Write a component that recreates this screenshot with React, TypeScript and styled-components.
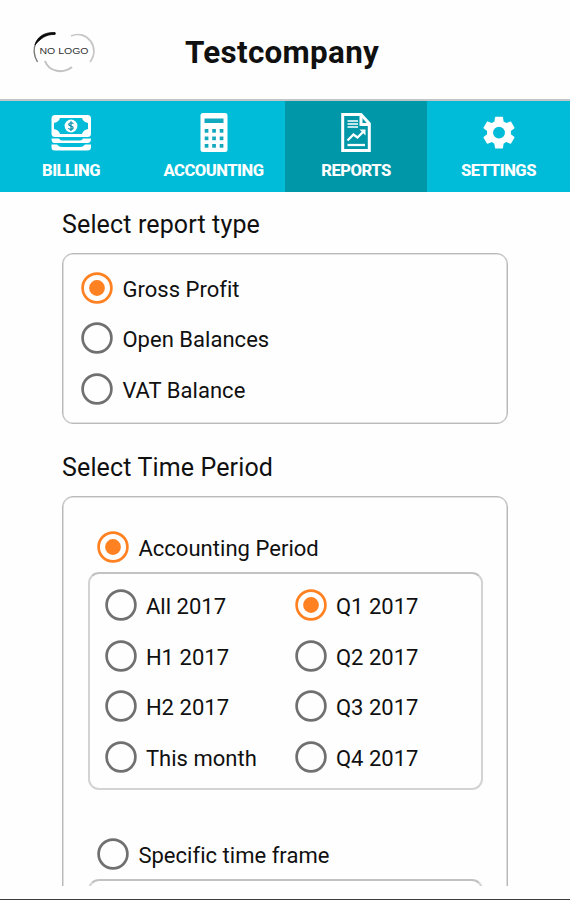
import React from "react";
import styled, { createGlobalStyle } from "styled-components";

const Global = createGlobalStyle`
  *, *::before, *::after { box-sizing: border-box; }
  body { margin: 0; background: #fefefe; font-family: Roboto, "Liberation Sans", sans-serif; color: #101010; }
`;

const Screen = styled.div`
  display: flex;
  flex-direction: column;
  width: 570px;
  height: 900px;
  overflow: hidden;
  background: #fefefe;
  border-bottom: 1px solid #3c3c3c;
`;

const Header = styled.header`
  display: grid;
  grid-template-columns: 128px 1fr 134px;
  align-items: center;
  flex: none;
  height: 101px;
  border-bottom: 2px solid #c3c6c7;
`;

const Logo = styled.svg`
  display: block;
  width: 70px;
  height: 48px;
  margin-left: 29px;
`;

const Title = styled.h1`
  margin: 6px 0 0;
  padding-left: 57px;
  font-size: 31.4px;
  line-height: 36px;
  font-weight: 700;
  letter-spacing: 0.3px;
  white-space: nowrap;
`;

const Nav = styled.nav`
  display: grid;
  grid-template-columns: 142px 143px 142px 143px;
  flex: none;
  height: 91px;
  background: #00bcd8;
`;

const Tab = styled.a<{ $active?: boolean }>`
  display: flex;
  flex-direction: column;
  align-items: center;
  padding-top: 10px;
  color: #fff;
  background: ${(p) => (p.$active ? "#0097a9" : "transparent")};

  svg { display: block; width: 42px; height: 42px; flex: none; }
`;

const TabLabel = styled.span`
  margin-top: 8px;
  font-size: 16.6px;
  line-height: 20px;
  font-weight: 800;
  letter-spacing: -0.5px;
`;

const Content = styled.main`
  flex: none;
  height: 694px;
  padding: 16px 62px 0;
  overflow: hidden;
`;

const SectionTitle = styled.h2<{ $gap: number }>`
  margin: 0 0 ${(p) => p.$gap}px;
  font-size: 25px;
  line-height: 34px;
  font-weight: 400;
  letter-spacing: 0.14px;
  white-space: nowrap;
`;

const Panel = styled.section<{ $height: number; $pad: string }>`
  width: 446px;
  height: ${(p) => p.$height}px;
  padding: ${(p) => p.$pad};
  border: 1px solid #b9b9b9;
  box-shadow: inset 0 0 0 0.6px #c8c8c8;
  border-radius: 11px;
  margin-bottom: 27px;
`;

const InnerPanel = styled.div`
  display: grid;
  grid-template-columns: 190px 1fr;
  width: 395px;
  height: 218px;
  padding: 6px 0 0 14.5px;
  border: 2px solid #d3d3d3;
  border-top-color: #c2c2c2;
  border-radius: 11px;
  margin: -0.6px 0 39px 25px;
`;

const Option = styled.label<{ $indent?: boolean }>`
  display: flex;
  align-items: center;
  gap: 9.4px;
  height: 50.67px;
  padding-left: ${(p) => (p.$indent ? 34 : 0)}px;
`;

const OptionText = styled.span`
  padding-top: 4px;
  font-size: 22px;
  line-height: 28px;
  letter-spacing: 0.03px;
  white-space: nowrap;
`;

const RadioSvg = styled.svg`
  display: block;
  flex: none;
  width: 32px;
  height: 32px;
`;

function Radio({ label, on, indent }: { label: string; on?: boolean; indent?: boolean }) {
  return (
    <Option $indent={indent}>
      <RadioSvg viewBox="0 0 32 32">
        <circle cx="16" cy="16" r="14.4" fill="none" stroke={on ? "#ff8122" : "#707070"} strokeWidth="2.7" />
        {on && <circle cx="16" cy="16" r="7.9" fill="#ff8122" />}
      </RadioSvg>
      <OptionText>{label}</OptionText>
    </Option>
  );
}

const BillingIcon = () => (
  <svg viewBox="0 0 42 42">
    <rect x="1.500" y="4" width="39.500" height="22" rx="3.500" fill="#fff" />
    <path d="M10 7H32Q33 11 38 12V18Q33 19 32 23H10Q9 19 4 18V12Q9 11 10 7Z" fill="#00bcd8" />
    <circle cx="21" cy="15" r="6.400" fill="#fff" />
    <path d="M23.4 12.8C22.7 11.3 18.7 11.3 18.8 13.4C18.9 15.3 23.3 14.7 23.2 16.9C23.1 19 19 18.9 18.5 17.1M21 10.3V19.9" fill="none" stroke="#008ba8" strokeWidth="1.2" />
    <path d="M1.500 27.500H9Q10 29.500 12 29.500H30Q32 29.500 33 27.500H41Q41 32 37.500 32H4.500Q1.500 32 1.500 27.500ZM1.500 33.500H7Q9 36 12 36H30Q33 36 35 33.500H41V36Q41 39.500 37.500 39.500H4.500Q1.500 39.500 1.500 36Z" fill="#fff" />
  </svg>
);

const AccountingIcon = () => (
  <svg viewBox="0 0 42 42">
    <rect x="7.500" y="2" width="27" height="39" rx="2.500" fill="#fff" />
    <rect x="11.500" y="7.500" width="19" height="4.500" fill="#12a8bd" />
    {[18, 25.5, 33].map((y) => [11.7, 19.2, 26.7].map((x) => (
      <rect key={`${x}-${y}`} x={x} y={y} width="3.7" height="3.7" fill="#12a8bd" />
    )))}
  </svg>
);

const ReportsIcon = () => (
  <svg viewBox="0 0 42 42" fill="none" stroke="#fff">
    <path d="M7.700 3.500H26L34.300 12.500V39.500H7.700Z" strokeWidth="3" />
    <path d="M26 4V13.500H34" strokeWidth="3" />
    <path d="M12.500 10H23M12.500 13H23M12.500 16H23" strokeWidth="1.700" />
    <path d="M12.500 29.500L18.500 23.500L22.500 26.500L29 20" strokeWidth="2.300" />
    <path d="M24.500 18.500H30.500V24.500Z" fill="#fff" stroke="none" />
    <path d="M12.500 34H30" strokeWidth="2.300" />
  </svg>
);

const SettingsIcon = () => (
  <svg viewBox="0 0 24 24">
    <path transform="translate(12 12.350) scale(.95) translate(-12 -12)" fill="#fff" d="M19.140 12.940c.04-.3.060-.610.060-.940 0-.320-.020-.640-.070-.940l2.030-1.580c.180-.140.230-.410.120-.610l-1.920-3.320c-.120-.220-.370-.290-.590-.220l-2.390.960c-.500-.380-1.030-.700-1.620-.940l-.360-2.540c-.040-.240-.240-.410-.480-.410h-3.840c-.240 0-.430.170-.470.410l-.360 2.540c-.590.240-1.130.570-1.620.940l-2.390-.960c-.220-.080-.470 0-.590.220L2.740 8.870c-.120.210-.080.470.120.610l2.030 1.580c-.050.300-.090.630-.090.940s.020.640.070.940l-2.030 1.580c-.180.140-.230.410-.120.610l1.920 3.320c.120.220.370.290.590.220l2.390-.960c.500.380 1.030.700 1.620.940l.360 2.540c.050.240.240.410.480.410h3.840c.240 0 .440-.170.470-.410l.360-2.540c.590-.240 1.130-.560 1.620-.940l2.390.960c.220.080.470 0 .590-.220l1.920-3.320c.120-.220.070-.470-.120-.610zM12 15.600a3.600 3.600 0 1 1 0-7.200 3.600 3.600 0 0 1 0 7.200z" />
  </svg>
);

export default function App() {
  return (
    <>
      <Global />
      <Screen>
        <Header>
          <Logo viewBox="0 0 70 48">
            <path d="M8.500 36C1.500 24 5 7 27 7.500" fill="none" stroke="#777" strokeWidth="1.400" />
            <path d="M6 19C8 11 15 6 26 6.500V8.500C17 8 11 13 6 19Z" fill="#090909" stroke="#111" strokeWidth=".8" />
            <path d="M42 10C58 3 72 22 61 36" fill="none" stroke="#c6c6c6" strokeWidth="1.700" />
            <path d="M16 35C20 46 34 48 43 41" fill="none" stroke="#c2c2c2" strokeWidth="2" />
            <text x="35" y="27.500" textAnchor="middle" fontFamily="Liberation Sans, sans-serif" fontSize="9.500" fill="#333" textLength="49" lengthAdjust="spacingAndGlyphs">NO LOGO</text>
          </Logo>
          <Title>Testcompany</Title>
        </Header>
        <Nav>
          <Tab><BillingIcon /><TabLabel>BILLING</TabLabel></Tab>
          <Tab><AccountingIcon /><TabLabel>ACCOUNTING</TabLabel></Tab>
          <Tab $active><ReportsIcon /><TabLabel>REPORTS</TabLabel></Tab>
          <Tab><SettingsIcon /><TabLabel>SETTINGS</TabLabel></Tab>
        </Nav>
        <Content>
          <SectionTitle $gap={11}>Select report type</SectionTitle>
          <Panel $height={171} $pad="8.4px 0 0 18px">
            <Radio on label="Gross Profit" />
            <Radio label="Open Balances" />
            <Radio label="VAT Balance" />
          </Panel>
          <SectionTitle $gap={11}>Select Time Period</SectionTitle>
          <Panel $height={460} $pad="24.6px 0 0 0">
            <Radio on indent label="Accounting Period" />
            <InnerPanel>
              <div>
                <Radio label="All 2017" />
                <Radio label="H1 2017" />
                <Radio label="H2 2017" />
                <Radio label="This month" />
              </div>
              <div>
                <Radio on label="Q1 2017" />
                <Radio label="Q2 2017" />
                <Radio label="Q3 2017" />
                <Radio label="Q4 2017" />
              </div>
            </InnerPanel>
            <Radio indent label="Specific time frame" />
            <InnerPanel />
          </Panel>
        </Content>
      </Screen>
    </>
  );
}
